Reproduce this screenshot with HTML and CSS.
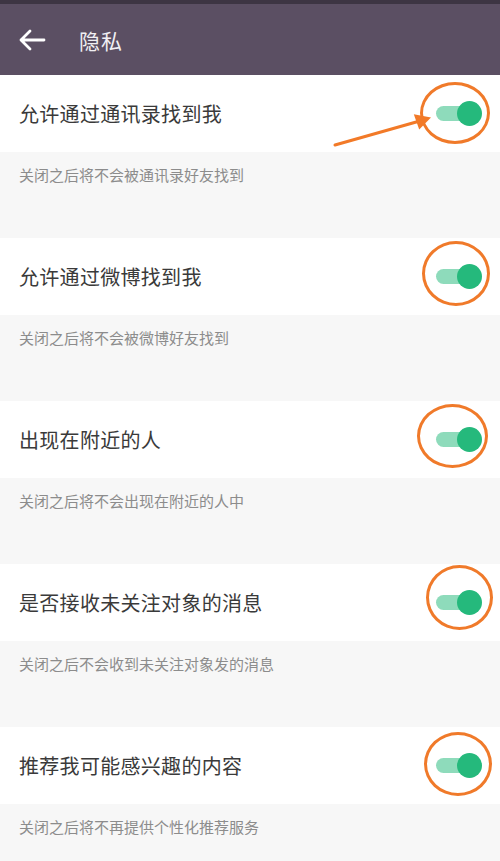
FILE: index.html
```html
<!DOCTYPE html>
<html lang="zh-CN">
<head>
    <meta charset="UTF-8">
    <meta name="viewport" content="width=device-width, initial-scale=1.0">
    <title>隐私</title>
    <link rel="stylesheet" href="styles.css">
</head>
<body>
    <header class="topbar">
        <svg class="back" width="28" height="22" viewBox="0 0 28 22">
            <path d="M26 11H3M12 2L3 11l9 9" fill="none" stroke="#fff" stroke-width="2.8" stroke-linecap="round" stroke-linejoin="round"/>
        </svg>
        <div class="topbar-title">隐私</div>
    </header>

    <section class="setting">
        <div class="setting-row">
            <span class="setting-name">允许通过通讯录找到我</span>
            <div class="toggle"><span class="mark mark-1"></span></div>
            <svg class="pointer" width="105" height="40" viewBox="0 0 105 40">
                <line x1="5" y1="34" x2="88" y2="10.5" stroke="#f27a28" stroke-width="3" stroke-linecap="round"/>
                <polygon points="101,6.5 89.2,18.5 83.8,3.2" fill="#f27a28"/>
            </svg>
        </div>
        <div class="setting-desc">关闭之后将不会被通讯录好友找到</div>
    </section>

    <section class="setting">
        <div class="setting-row">
            <span class="setting-name">允许通过微博找到我</span>
            <div class="toggle"><span class="mark mark-2"></span></div>
        </div>
        <div class="setting-desc">关闭之后将不会被微博好友找到</div>
    </section>

    <section class="setting">
        <div class="setting-row">
            <span class="setting-name">出现在附近的人</span>
            <div class="toggle"><span class="mark mark-3"></span></div>
        </div>
        <div class="setting-desc">关闭之后将不会出现在附近的人中</div>
    </section>

    <section class="setting">
        <div class="setting-row">
            <span class="setting-name">是否接收未关注对象的消息</span>
            <div class="toggle"><span class="mark mark-4"></span></div>
        </div>
        <div class="setting-desc">关闭之后不会收到未关注对象发的消息</div>
    </section>

    <section class="setting">
        <div class="setting-row">
            <span class="setting-name">推荐我可能感兴趣的内容</span>
            <div class="toggle"><span class="mark mark-5"></span></div>
        </div>
        <div class="setting-desc">关闭之后将不再提供个性化推荐服务</div>
    </section>
</body>
</html>
```

FILE: styles.css
```css
body {
    margin: 0;
    background: #f7f7f7;
    font-family: "Noto Sans CJK SC", "Noto Sans", sans-serif;
}
.topbar {
    height: 71px;
    border-top: 4px solid #3d3543;
    background: #5b4f63;
    display: flex;
    align-items: center;
    padding-left: 18px;
    box-sizing: content-box;
}
.back {
    display: block;
}
.topbar-title {
    margin-left: 33px;
    font-size: 21px;
    color: #f1eff3;
    letter-spacing: 1px;
}
.setting-row {
    position: relative;
    height: 77px;
    background: #fff;
    display: flex;
    align-items: center;
    justify-content: space-between;
    padding: 0 18px 0 19px;
}
.setting-name {
    font-size: 20px;
    letter-spacing: 0.3px;
    color: #3a3a3a;
}
.setting-desc {
    height: 86px;
    box-sizing: border-box;
    padding: 13px 19px 0;
    font-size: 15px;
    line-height: 20px;
    color: #8c8c8c;
}
.toggle {
    position: relative;
    width: 46px;
    height: 25px;
}
.toggle::before {
    content: "";
    position: absolute;
    left: 0;
    right: 6px;
    top: 5px;
    height: 15px;
    border-radius: 8px;
    background: #8edbbb;
}
.toggle::after {
    content: "";
    position: absolute;
    right: 0;
    top: 0;
    width: 25px;
    height: 25px;
    border-radius: 50%;
    background: #25b97c;
}
/* orange annotation rings */
.mark {
    position: absolute;
    left: -16px;
    top: -20px;
    width: 64px;
    height: 59px;
    border: 3px solid #f07a2a;
    border-radius: 50%;
}
.mark-1 { left: -16px; top: -19px; width: 64px; height: 56px; }
.mark-2 { left: -14px; top: -23px; width: 62px; height: 59px; }
.mark-3 { left: -19px; top: -23px; width: 65px; height: 58px; }
.mark-4 { left: -10px; top: -25px; width: 61px; height: 59px; }
.mark-5 { left: -12px; top: -21px; width: 62px; height: 58px; }
.pointer {
    position: absolute;
    left: 330px;
    top: 36px;
}
```
